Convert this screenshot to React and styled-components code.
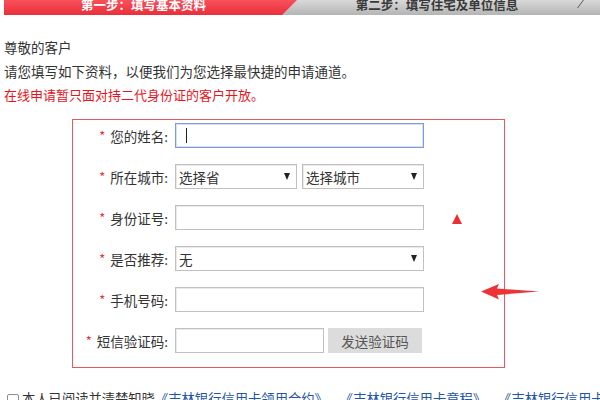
import React from "react";
import styled, { createGlobalStyle } from "styled-components";

const Global = createGlobalStyle`
  html, body { margin: 0; padding: 0; background: #fff; }
  body {
    font-family: "Noto Sans CJK SC", "Noto Sans", sans-serif;
    color: #333;
    overflow: hidden;
  }
`;

const Page = styled.div`
  width: 600px;
  height: 400px;
  overflow: hidden;
`;

const StepBar = styled.div`
  display: flex;
  height: 15px;
  margin-left: 4px;
  overflow: hidden;
  background: linear-gradient(#d9d9d9, #b4b4b4);
`;

const ActiveStep = styled.div`
  flex: none;
  box-sizing: border-box;
  width: 293px;
  height: 15px;
  padding-right: 14px;
  background: linear-gradient(#f8505a, #e92f3b);
  clip-path: polygon(0 0, 100% 0, calc(100% - 15px) 100%, 0 100%);
  display: flex;
  align-items: flex-end;
  justify-content: center;
`;

const Step = styled.div`
  flex: none;
  width: 280px;
  height: 15px;
  display: flex;
  align-items: flex-end;
  justify-content: center;
`;

const StepText = styled.span`
  font-size: 12.5px;
  line-height: 13px;
  font-weight: 700;
  padding-bottom: 4px;
  white-space: nowrap;
  color: ${(p) => (p.$active ? "#fff" : "#3a3a3a")};
`;

const Divider = styled.svg`
  flex: none;
  display: block;
`;

const Intro = styled.div`
  padding: 20px 4px 0;
`;

const Line = styled.p`
  margin: 0;
  font-size: ${(p) => (p.$small ? "13px" : "13.5px")};
  line-height: 24px;
  white-space: nowrap;
  color: ${(p) => (p.$warn ? "#e8141c" : "#333")};
`;

const FormBox = styled.div`
  position: relative;
  box-sizing: border-box;
  width: 433px;
  margin: 12px 0 0 72px;
  padding: 3px 0 14px 0;
  border: 1px solid #e8575c;
  display: grid;
  grid-template-columns: 95px auto;
  column-gap: 7px;
  row-gap: 16px;
`;

const Label = styled.div`
  display: flex;
  align-items: center;
  justify-content: flex-end;
  height: 25px;
  font-size: 13.5px;
  color: #333;
  white-space: nowrap;
`;

const Star = styled.span`
  color: #e8333a;
  margin-right: 5px;
  font-size: 13px;
`;

const Controls = styled.div`
  display: flex;
  gap: ${(p) => p.$gap || 0}px;
  height: 25px;
`;

const Field = styled.div`
  box-sizing: border-box;
  width: ${(p) => p.$w}px;
  height: 25px;
  border: 1px solid ${(p) => (p.$focus ? "#7f9dd4" : "#c0c0c0")};
  box-shadow: ${(p) => (p.$focus ? "inset 0 0 0 1px #d6e0f3" : "inset 1px 1px 0 #eaeaea")};
  background: #fff;
  display: flex;
  align-items: center;
  padding: 0 6px 0 3px;
  font-size: 13.5px;
  color: #333;
  justify-content: ${(p) => (p.$select ? "space-between" : "flex-start")};
`;

const Caret = styled.span`
  display: block;
  width: 1px;
  height: 15px;
  margin-left: 7px;
  background: #222;
`;

const DropArrow = styled.span`
  width: 0;
  height: 0;
  border-left: 3.5px solid transparent;
  border-right: 3.5px solid transparent;
  border-top: 7px solid #222;
`;

const SendButton = styled.div`
  box-sizing: border-box;
  width: 94px;
  height: 25px;
  background: #dcdcdc;
  color: #555;
  font-size: 13.5px;
  display: flex;
  align-items: center;
  justify-content: center;
`;

const Triangle = styled.span`
  position: absolute;
  left: 379px;
  top: 94px;
  width: 0;
  height: 0;
  border-left: 5px solid transparent;
  border-right: 5px solid transparent;
  border-bottom: 10px solid #ec2f33;
`;

const ArrowMark = styled.svg`
  position: absolute;
  left: 408px;
  top: 163px;
`;

const Agreement = styled.div`
  display: flex;
  align-items: flex-start;
  margin: 21px 0 0 7px;
  font-size: 13.3px;
  line-height: 20px;
  white-space: nowrap;
  color: #333;
`;

const Box = styled.span`
  flex: none;
  box-sizing: border-box;
  width: 12px;
  height: 12px;
  margin: 5px 3px 0 0;
  border: 1px solid #8e8e8e;
  border-radius: 2px;
  background: #fff;
`;

const Doc = styled.span`
  color: #1f55a6;
`;

const Sep = styled.span`
  padding: 0 6px;
`;

const rows = [
  { label: "您的姓名:", kind: "focus" },
  { label: "所在城市:", kind: "city" },
  { label: "身份证号:", kind: "input" },
  { label: "是否推荐:", kind: "recommend" },
  { label: "手机号码:", kind: "input" },
  { label: "短信验证码:", kind: "sms" },
];

function RowControls({ kind }) {
  if (kind === "focus")
    return (
      <Controls>
        <Field $w={249} $focus>
          <Caret />
        </Field>
      </Controls>
    );
  if (kind === "city")
    return (
      <Controls $gap={5}>
        <Field $w={122} $select>
          选择省
          <DropArrow />
        </Field>
        <Field $w={122} $select>
          选择城市
          <DropArrow />
        </Field>
      </Controls>
    );
  if (kind === "recommend")
    return (
      <Controls>
        <Field $w={249} $select>
          无
          <DropArrow />
        </Field>
      </Controls>
    );
  if (kind === "sms")
    return (
      <Controls $gap={4}>
        <Field $w={149} />
        <SendButton>发送验证码</SendButton>
      </Controls>
    );
  return (
    <Controls>
      <Field $w={249} />
    </Controls>
  );
}

export default function App() {
  return (
    <Page>
      <Global />
      <StepBar>
        <ActiveStep>
          <StepText $active>第一步：填写基本资料</StepText>
        </ActiveStep>
        <Step>
          <StepText>第二步：填写住宅及单位信息</StepText>
        </Step>
        <Divider width="10" height="15" viewBox="0 0 10 15">
          <line x1="6.5" y1="0" x2="0.5" y2="8" stroke="#5a5a5a" strokeWidth="1" />
        </Divider>
      </StepBar>

      <Intro>
        <Line>尊敬的客户</Line>
        <Line>请您填写如下资料，以便我们为您选择最快捷的申请通道。</Line>
        <Line $warn $small>在线申请暂只面对持二代身份证的客户开放。</Line>
      </Intro>

      <FormBox>
        {rows.map((r) => (
          <React.Fragment key={r.label}>
            <Label>
              <Star>*</Star>
              {r.label}
            </Label>
            <RowControls kind={r.kind} />
          </React.Fragment>
        ))}
        <Triangle />
        <ArrowMark width="60" height="18" viewBox="0 0 60 18">
          <polygon points="0,8.5 18,1 16,5.5 58,8.5 16,12 18,16.5" fill="#ee3336" />
        </ArrowMark>
      </FormBox>

      <Agreement>
        <Box />
        <span>
          本人已阅读并清楚知晓<Doc>《吉林银行信用卡领用合约》</Doc>
          <Sep>、</Sep>
          <Doc>《吉林银行信用卡章程》</Doc>
          <Sep>、</Sep>
          <Doc>《吉林银行信用卡领用须知》</Doc>
        </span>
      </Agreement>
    </Page>
  );
}
